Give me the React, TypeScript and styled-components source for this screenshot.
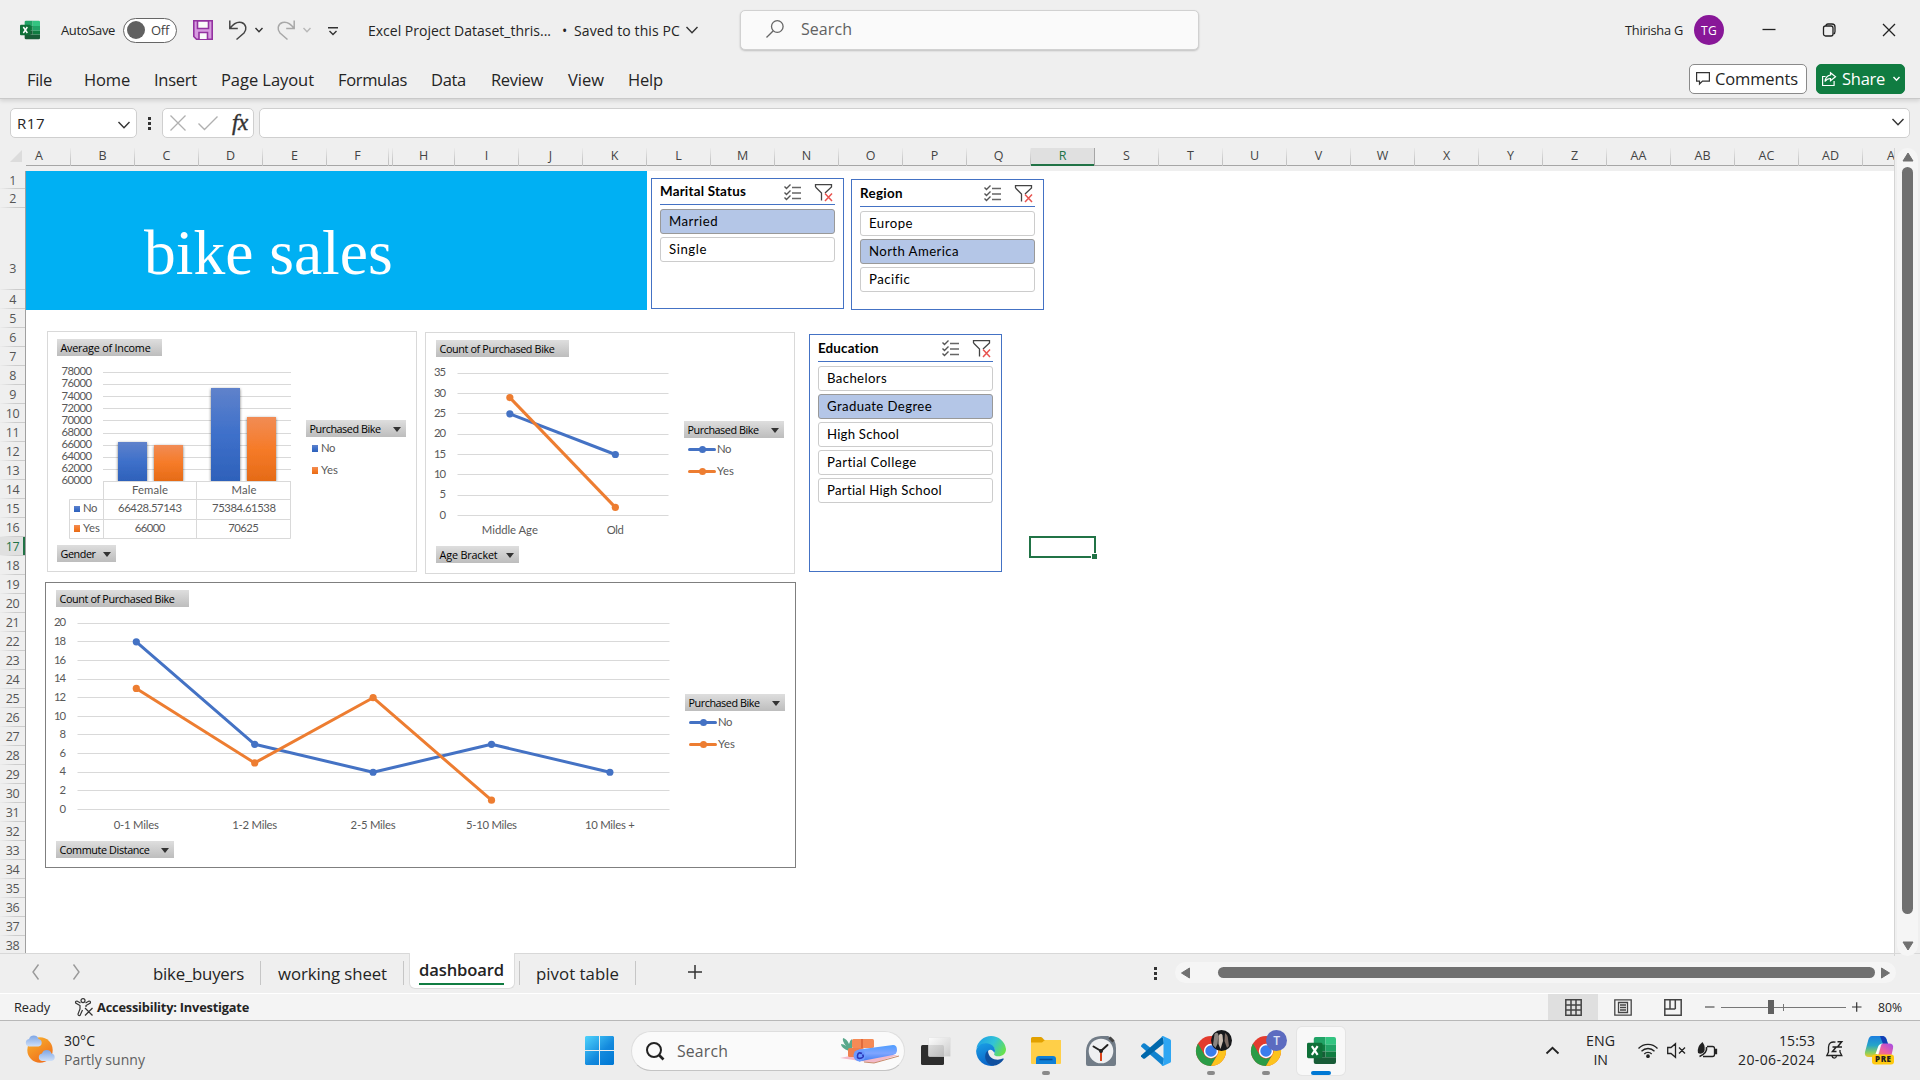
import React, { useLayoutEffect, useRef } from 'react';
import styled, { createGlobalStyle, css } from 'styled-components';

const UI = '"Open Sans", "Noto Sans", sans-serif';
const BODY = 'Lato, "Open Sans", sans-serif';
const BLUE = '#4472c4';
const ORANGE = '#ed7d31';
const GREEN = '#107c41';

const Global = createGlobalStyle`
  * { box-sizing: border-box; }
  body { margin: 0; background: #efefef; overflow: hidden; font-family: ${UI}; color: #242424; }
`;

/* ---------- text whose tracking adapts to the room it has ---------- */

const FitBox = styled.span<{ $w: number; $size: number; $ml?: number; $mt?: number; $bold?: number; $color?: string; $body?: boolean }>`
  display: block;
  flex: none;
  width: ${p => p.$w}px;
  margin: ${p => p.$mt ?? 0}px 0 0 ${p => p.$ml ?? 0}px;
  font: ${p => p.$bold ?? 400} ${p => p.$size}px/1.3 ${p => (p.$body ? BODY : UI)};
  color: ${p => p.$color ?? 'inherit'};
  white-space: pre;
`;

type FitProps = { w: number; size: number; ml?: number; mt?: number; bold?: number; color?: string; body?: boolean; children: string };

function Fit({ w, size, ml, mt, bold, color, body, children }: FitProps) {
  const ref = useRef<HTMLSpanElement>(null);
  useLayoutEffect(() => {
    const inner = ref.current;
    if (!inner) return;
    inner.style.letterSpacing = '0px';
    const natural = inner.getBoundingClientRect().width;
    inner.style.letterSpacing = `${(w - natural) / Math.max(1, children.length)}px`;
  }, [w, children]);
  return (
    <FitBox $w={w} $size={size} $ml={ml} $mt={mt} $bold={bold} $color={color} $body={body}>
      <span ref={ref}>{children}</span>
    </FitBox>
  );
}

const Icon = styled.svg<{ $ml?: number; $mt?: number }>`
  display: block;
  flex: none;
  overflow: visible;
  margin-left: ${p => p.$ml ?? 0}px;
  margin-top: ${p => p.$mt ?? 0}px;
`;

/* ---------- layout ---------- */

const Page = styled.div`
  width: 1920px;
  height: 1080px;
  display: grid;
  grid-template-rows: 99px 49px 805px 40px 28px 59px;
  background: #efefef;
`;

const Header = styled.header`
  position: relative;
  z-index: 1;
  border-bottom: 1px solid #c9c9c9;
  box-shadow: 0 2px 4px rgba(0, 0, 0, 0.12);
  background: #efefef;
`;

const TitleBar = styled.div`
  height: 60px;
  padding-left: 20px;
  display: flex;
  align-items: center;
`;

const Toggle = styled.div`
  width: 54px;
  height: 25px;
  margin-left: 8px;
  flex: none;
  border: 1px solid #666;
  border-radius: 13px;
  background: #fff;
  display: flex;
  align-items: center;
  padding-left: 3px;
  color: #444;
`;

const Knob = styled.i`
  width: 18px;
  height: 18px;
  border-radius: 50%;
  background: #616161;
`;

const SearchBox = styled.div`
  width: 459px;
  height: 40px;
  margin-left: 42px;
  flex: none;
  display: flex;
  align-items: center;
  padding: 0 0 2px 25px;
  border: 1px solid #d1d1d1;
  border-radius: 5px;
  background: #fafafa;
  box-shadow: 0 1px 2px rgba(0, 0, 0, 0.2);
`;

const Avatar = styled.div`
  width: 30px;
  height: 30px;
  margin-left: 11px;
  flex: none;
  border-radius: 50%;
  background: #881798;
  display: flex;
  align-items: center;
  justify-content: center;
`;

const Ribbon = styled.nav`
  height: 38px;
  padding: 0 15px 0 27px;
  display: flex;
  align-items: center;
`;

const RibbonButton = styled.button<{ $primary?: boolean }>`
  width: ${p => (p.$primary ? 89 : 118)}px;
  height: 30px;
  margin: 0 0 0 ${p => (p.$primary ? '9px' : 'auto')};
  padding: 0 0 0 6px;
  display: flex;
  align-items: center;
  border: 1px solid ${p => (p.$primary ? GREEN : '#8a8a8a')};
  border-radius: 5px;
  background: ${p => (p.$primary ? GREEN : '#fff')};
  color: ${p => (p.$primary ? '#fff' : '#242424')};
`;

const FormulaBar = styled.div`
  display: flex;
  align-items: flex-start;
  padding: 9px 0 0 10px;
`;

const Field = styled.div<{ $w: number; $ml?: number }>`
  width: ${p => p.$w}px;
  height: 30px;
  margin-left: ${p => p.$ml ?? 0}px;
  flex: none;
  border: 1px solid #cfcfcf;
  border-radius: 5px;
  background: #fff;
  display: flex;
  align-items: center;
`;

const FxLabel = styled.span`
  margin-left: 14px;
  font: italic 400 23px/26px "Liberation Serif", serif;
  letter-spacing: -0.5px;
  -webkit-text-stroke: 0.4px #333;
  color: #333;
`;

const Dots = styled.div<{ $ml: number; $mt?: number }>`
  width: 3px;
  height: 13px;
  margin: ${p => p.$mt ?? 0}px 0 0 ${p => p.$ml}px;
  flex: none;
  display: flex;
  flex-direction: column;
  justify-content: space-between;
  i { height: 3px; background: #333; }
`;

const SheetArea = styled.main`
  display: grid;
  grid-template-columns: 1895px 25px;
  min-height: 0;
`;

const SheetPane = styled.div`
  display: grid;
  grid-template-rows: 18px 5px 782px;
  overflow: hidden;
  border-right: 1px solid #d5d5d5;
`;

const ColumnHeader = styled.div`
  display: flex;
  overflow: hidden;
`;

const Corner = styled.div`
  width: 26px;
  height: 18px;
  flex: none;
  padding: 2px 0 0 10px;
`;

const ColumnCell = styled.div<{ $w: number; $shift?: number; $active?: boolean }>`
  width: ${p => p.$w}px;
  height: 18px;
  flex: none;
  display: flex;
  justify-content: center;
  padding-right: ${p => p.$shift ?? 0}px;
  font: 12.5px/15px ${UI};
  color: ${p => (p.$active ? '#217346' : '#444')};
  border-right: 1px solid;
  border-image: linear-gradient(#efefef, #c4c4c4 70%) 1;
  box-shadow: inset 0 -1px 0 #a6a6a6;
  ${p => p.$active && css`
    background: #e0e0e0;
    box-shadow: inset 0 -2px 0 #217346;
    border-image: none;
    border-color: #a6a6a6;
  `}
`;

const SheetBody = styled.div`
  display: flex;
  overflow: hidden;
`;

const RowHeader = styled.div`
  width: 26px;
  flex: none;
  border-right: 1px solid #a0a0a0;
`;

const RowCell = styled.div<{ $h: number; $pb?: number; $active?: boolean }>`
  height: ${p => p.$h}px;
  padding: 2px 0 ${p => p.$pb ?? 0}px;
  display: flex;
  align-items: ${p => (p.$pb ? 'flex-end' : 'center')};
  justify-content: center;
  font: 12.5px/16px ${UI};
  letter-spacing: -0.5px;
  color: ${p => (p.$active ? '#217346' : '#555')};
  border-bottom: 1px solid #d2d2d2;
  border-image: linear-gradient(90deg, #efefef, #cccccc 60%) 1;
  ${p => p.$active && css`
    background: #e0e0e0;
    box-shadow: inset -2px 0 0 #217346;
  `}
`;

const Canvas = styled.div`
  position: relative;
  flex: 1;
  background: #fff;
`;

const floating = css<{ $x: number; $y: number; $w: number; $h: number }>`
  position: absolute;
  left: ${p => p.$x - 26}px;
  top: ${p => p.$y - 171}px;
  width: ${p => p.$w}px;
  height: ${p => p.$h}px;
`;

const Banner = styled.h1`
  ${floating}
  margin: 0;
  padding: 45px 0 0 118px;
  background: #00b0f3;
  color: #fff;
  font: 400 63.5px/74px "Liberation Serif", serif;
`;

const SlicerBox = styled.section`
  ${floating}
  border: 1px solid ${BLUE};
  background: #fff;
  padding: 0 8px;
`;

const SlicerHead = styled.div<{ $h: number }>`
  height: ${p => p.$h}px;
  margin-bottom: 4px;
  padding: 1px 3px 0 0;
  display: flex;
  align-items: center;
  border-bottom: 1px solid ${BLUE};
  color: #000;
  & > svg:nth-of-type(1) { margin-left: auto; }
`;

const SlicerItem = styled.div<{ $on?: boolean }>`
  height: 25px;
  margin-bottom: 3px;
  padding-left: 8px;
  display: flex;
  align-items: center;
  border: 1px solid ${p => (p.$on ? '#999' : '#ccc')};
  border-radius: 3px;
  background: ${p => (p.$on ? '#b4c6e7' : '#fff')};
  color: #000;
`;

const Selection = styled.div`
  ${floating}
  border: 2px solid #217346;
`;

const Handle = styled.div`
  ${floating}
  border: solid #fff;
  border-width: 1px 0 0 1px;
  background: #217346;
`;

const ChartCard = styled.section<{ $dark?: boolean; $pl?: number }>`
  ${floating}
  border: 1px solid ${p => (p.$dark ? '#7f7f7f' : '#d9d9d9')};
  background: #fff;
  padding: 7px 0 0 ${p => p.$pl ?? 10}px;
`;

const ChartBody = styled.div`
  display: flex;
`;

const FieldButton = styled.div<{ $w: number }>`
  width: ${p => p.$w}px;
  height: 17px;
  padding: 1px 0 0 3.5px;
  display: flex;
  align-items: center;
  background: linear-gradient(#dedede, #bdbdbd);
  color: #000;
`;

const Arrow = styled.i`
  margin: 0 5px 0 auto;
  border: 4px solid transparent;
  border-top: 5px solid #333;
  border-bottom: 0;
`;

const Legend = styled.div<{ $mt: number }>`
  margin-top: ${p => p.$mt}px;
`;

const LegendItem = styled.div`
  height: 22px;
  padding: 1px 0 0 4px;
  display: flex;
  align-items: center;
  gap: 1px;
`;

const VScroll = styled.div`
  width: 21px;
  height: 808px;
  margin-left: 2px;
  border-radius: 11px;
  background: #f5f5f5;
  display: flex;
  flex-direction: column;
  align-items: center;
  z-index: 1;
`;

const Thumb = styled.i<{ $w: number; $h: number }>`
  width: ${p => p.$w}px;
  height: ${p => p.$h}px;
  flex: none;
  border-radius: 6px;
  background: #707070;
`;

const TabBar = styled.div`
  display: flex;
  border-top: 1px solid #d8d8d8;
`;

const Tab = styled.div<{ $w: number; $pl: number; $ml?: number }>`
  width: ${p => p.$w}px;
  height: 24px;
  margin: 7px 0 0 ${p => p.$ml ?? 0}px;
  padding: 2px 0 0 ${p => p.$pl}px;
  flex: none;
  display: flex;
  align-items: center;
  border-right: 1px solid #c6c6c6;
`;

const ActiveTab = styled.div`
  width: 106px;
  height: 36px;
  margin: -1px 0 0 5px;
  padding: 6px 0 0 9px;
  flex: none;
  background: #fff;
  border: 1px solid #dcdcdc;
  border-top: 0;
  border-radius: 0 0 6px 6px;
`;

const Underline = styled.i`
  display: block;
  width: 85px;
  height: 2px;
  margin-top: 2px;
  background: ${GREEN};
`;

const HScroll = styled.div`
  width: 721px;
  height: 21px;
  margin: 8px 0 0 18px;
  padding-left: 6px;
  display: flex;
  align-items: center;
  border-radius: 11px;
  background: #f5f5f5;
`;

const StatusBar = styled.div`
  display: flex;
  align-items: center;
  padding-left: 14px;
  border-top: 1px solid #fff;
  border-bottom: 1px solid #b8b8b8;
  background: #f4f4f4;
`;

const ViewButton = styled.div<{ $on?: boolean; $ml?: number }>`
  width: 50px;
  height: 26px;
  flex: none;
  margin-left: ${p => p.$ml ?? 0}px;
  display: flex;
  align-items: center;
  justify-content: center;
  background: ${p => (p.$on ? '#dfdfdf' : 'transparent')};
`;

const Taskbar = styled.footer`
  display: flex;
  align-items: center;
  padding: 0 0 0 25px;
  background: #ededed;
`;

const Stack = styled.div<{ $w: number; $ml: number; $align?: string }>`
  width: ${p => p.$w}px;
  margin-left: ${p => p.$ml}px;
  flex: none;
  display: flex;
  flex-direction: column;
  align-items: ${p => p.$align ?? 'flex-start'};
  gap: 1px;
`;

const TaskSearch = styled.div`
  width: 274px;
  height: 40px;
  margin-left: 17px;
  flex: none;
  padding-left: 14px;
  display: flex;
  align-items: center;
  border: 1px solid #dedede;
  border-bottom-color: #c4c4c4;
  border-radius: 20px;
  background: #fafafa;
`;

const TaskApp = styled.div<{ $ml: number; $tile?: boolean; $mark?: string }>`
  width: 48px;
  height: 48px;
  margin-left: ${p => p.$ml}px;
  flex: none;
  position: relative;
  display: flex;
  align-items: center;
  justify-content: center;
  border-radius: 5px;
  ${p => p.$tile && css`background: #f8f8f8; box-shadow: 0 0 0 1px #e4e4e4;`}
  ${p => p.$mark && css`
    &::after {
      content: '';
      position: absolute;
      bottom: 0;
      width: ${p.$tile ? 20 : 8}px;
      height: 4px;
      border-radius: 2px;
      background: ${p.$mark};
    }
  `}
`;

/* ---------- icons ---------- */

const Caret = ({ w = 8, ml = 0, mt = 0, color = '#333', sw = 1.4 }) => (
  <Icon $ml={ml} $mt={mt} width={w} height={w / 2} viewBox={`0 0 ${w} ${w / 2}`} fill="none" stroke={color} strokeWidth={sw}>
    <path d={`M.5 0 ${w / 2} ${w / 2 - 0.3} ${w - 0.5} 0`} />
  </Icon>
);

const ExcelIcon = ({ size }: { size: number }) => (
  <Icon width={size} height={size} viewBox="0 0 30 30">
    <path d="M9 1h10v9H7V3q0-2 2-2Z" fill="#21a366" />
    <path d="M19 1h9q2 0 2 2v6H19Z" fill="#33c481" />
    <path d="M7 9h12v7H7Z" fill="#107c41" />
    <path d="M19 9h11v7H19Z" fill="#21a366" />
    <path d="M7 16h12v6H7Z" fill="#185c37" />
    <path d="M19 16h11v6H19Z" fill="#107c41" />
    <path d="M7 22h23v5q0 2-2 2H9q-2 0-2-2Z" fill="#185c37" />
    <rect x="0" y="7" width="16" height="16" rx="1.500" fill="#0f7038" />
    <path d="m5 10.500 6 9M11 10.500l-6 9" stroke="#fff" strokeWidth="2.200" />
  </Icon>
);

const ChecklistIcon = () => (
  <Icon width="17" height="17" viewBox="0 0 17 17" fill="none" strokeWidth="1.400">
    <path d="M.5 2.500 2.500 4.500 6.500.5M.5 8.500l2 2 4-4M.5 13.500l2 2 4-4" stroke="#555" />
    <path d="M8 3.500h9M8 9h9M8 14.500h9" stroke="#666" />
  </Icon>
);

const ClearFilterIcon = () => (
  <Icon $ml={14} width="17" height="17" viewBox="0 0 17 17" fill="none" strokeWidth="1.300">
    <path d="M.5 3V.7h16V3L10 9M.5 3 6.500 9v7.500" stroke="#444" />
    <path d="M10 9.500 17 17M17 9.500 10 17" stroke="#e8534f" strokeWidth="1.500" />
  </Icon>
);

const ChromeIcon = ({ id }: { id: string }) => (
  <Icon width="30" height="30" viewBox="0 0 30 30">
    <circle cx="15" cy="15" r="15" fill="#e33b2e" />
    <path d="M2 7.500A15 15 0 0 0 15 30l6.500-11.250A7.500 7.500 0 0 1 8.500 18.750Z" fill="#2a9c46" />
    <path d="M15 30A15 15 0 0 0 28 7.500H15a7.500 7.500 0 0 1 6.500 11.250Z" fill="#fcc31e" />
    <circle cx="15" cy="15" r="7.200" fill="#fff" />
    <circle cx="15" cy="15" r="5.700" fill="#3b7ded" />
    {id === 'photo' ? (
      <g>
        <circle cx="25.500" cy="4.500" r="10.500" fill="#17181b" />
        <path d="M18.500-2q3-3 4 1l-1 9-2 4-2.500-3Z" fill="#8b8580" />
        <path d="M22.500 0q2-4 4-1l.5 6-2.500 8-2-5Z" fill="#cbbdb2" />
        <path d="M29-3q3 2 3 6l1 7-2 2-2.500-7Z" fill="#7d6c64" />
      </g>
    ) : (
      <g>
        <circle cx="25.500" cy="4.500" r="10.500" fill="#5c6bc0" />
        <text x="25.700" y="9" textAnchor="middle" fontFamily="Open Sans" fontWeight="600" fontSize="12" fill="#dfe2f5">T</text>
      </g>
    )}
  </Icon>
);

/* ---------- data ---------- */

const COLUMNS: [string, number, number?][] = [
  ['A', 45, 18], ['B', 64], ['C', 64], ['D', 64], ['E', 64], ['F', 62], ['', 4], ['H', 62],
  ...'I J K L M N O P Q R S T U V W X Y Z AA AB AC AD AE'.split(' ').map(c => [c, 64] as [string, number]),
];

const rowHeight = (n: number) => (n === 1 ? 18 : n === 3 ? 82 : 19);

const MENU: [string, number, number][] = [
  ['File', 25, 0], ['Home', 46, 32], ['Insert', 43, 24], ['Page Layout', 93, 24], ['Formulas', 69, 24],
  ['Data', 35, 24], ['Review', 52, 25], ['View', 36, 25], ['Help', 35, 24],
];

/* ---------- chart parts ---------- */

type Anchor = 'start' | 'middle' | 'end';
const ChartText = ({ x, y, w, anchor = 'middle', children }: { x: number; y: number; w: number; anchor?: Anchor; children: string }) => (
  <text x={x} y={y + 4} textAnchor={anchor} textLength={w} lengthAdjust="spacing" fontFamily={BODY} fontSize="11.300" fill="#595959">
    {children}
  </text>
);

const FieldLabel = ({ w, tw, arrow = true, children }: { w: number; tw: number; arrow?: boolean; children: string }) => (
  <FieldButton $w={w}>
    <Fit w={tw} size={10.8}>{children}</Fit>
    {arrow && <Arrow />}
  </FieldButton>
);

function ChartLegend({ mt, line }: { mt: number; line?: boolean }) {
  return (
    <Legend $mt={mt}>
      <FieldLabel w={100} tw={71}>Purchased Bike</FieldLabel>
      {[['No', BLUE, 14], ['Yes', ORANGE, 17]].map(([name, color, w]) => (
        <LegendItem key={name}>
          {line ? (
            <Icon width="28" height="7" viewBox="0 0 28 7">
              <path d="M1.500 3.500h25" stroke={color as string} strokeWidth="3" strokeLinecap="round" />
              <circle cx="14.500" cy="3.500" r="3.500" fill={color as string} />
            </Icon>
          ) : (
            <Icon width="10" height="7" viewBox="-2 0 10 7">
              <rect y="0" width="6" height="7" fill={`url(#${name === 'No' ? 'gBlue' : 'gOrange'})`} />
            </Icon>
          )}
          <Fit body w={w as number} size={11.3} color="#595959">{name as string}</Fit>
        </LegendItem>
      ))}
    </Legend>
  );
}

type LineProps = {
  box: [number, number, number, number];
  x0: number; x1: number; yTop: number; yBase: number; max: number; step: number; labelX: number; catY: number;
  cats: [string, number][];
  series: { color: string; values: number[] }[];
};

function LinePlot({ box, x0, x1, yTop, yBase, max, step, labelX, catY, cats, series }: LineProps) {
  const ticks = Array.from({ length: max / step + 1 }, (_, i) => i * step);
  const y = (v: number) => yBase - ((yBase - yTop) * v) / max;
  const cw = (x1 - x0) / cats.length;
  const x = (i: number) => x0 + cw * (i + 0.5);
  return (
    <Icon width={box[2]} height={box[3]} viewBox={box.join(' ')}>
      {ticks.map(t => (
        <g key={t}>
          <path d={`M${x0} ${Math.round(y(t)) + 0.5}H${x1}`} stroke="#d9d9d9" />
          <ChartText x={labelX} y={y(t) - 0.3} w={t > 9 ? 12 : 6} anchor="end">{String(t)}</ChartText>
        </g>
      ))}
      {cats.map(([c, w], i) => <ChartText key={c} x={x(i) - 0.4} y={catY} w={w}>{c}</ChartText>)}
      {series.map(s => (
        <g key={s.color}>
          <polyline points={s.values.map((v, i) => `${x(i) - 0.4},${y(v) + 0.5}`).join(' ')} fill="none" stroke={s.color} strokeWidth="3" strokeLinejoin="round" />
          {s.values.map((v, i) => <circle key={i} cx={x(i) - 0.4} cy={y(v) + 0.5} r="3.600" fill={s.color} />)}
        </g>
      ))}
    </Icon>
  );
}

function IncomePlot() {
  const bars: [number, number, string][] = [[118, 442, 'gBlue'], [154, 445, 'gOrange'], [211, 388, 'gBlue'], [247, 417, 'gOrange']];
  return (
    <Icon width="249" height="189" viewBox="57 356 249 189">
      <defs>
        <linearGradient id="gBlue" x1="0" y1="0" x2="0" y2="1">
          <stop offset="0" stopColor="#5f82cb" /><stop offset=".5" stopColor="#3e70ca" /><stop offset="1" stopColor="#2e61ba" />
        </linearGradient>
        <linearGradient id="gOrange" x1="0" y1="0" x2="0" y2="1">
          <stop offset="0" stopColor="#f18c55" /><stop offset=".5" stopColor="#f67b28" /><stop offset="1" stopColor="#e56b17" />
        </linearGradient>
        <filter id="barShadow" x="-30%" y="-10%" width="160%" height="120%">
          <feDropShadow dx="0" dy="1" stdDeviation="1.800" floodColor="#000" floodOpacity=".55" />
        </filter>
        <clipPath id="aboveAxis"><rect x="95" y="360" width="200" height="121" /></clipPath>
      </defs>
      {Array.from({ length: 10 }, (_, i) => (
        <g key={i}>
          <path d={`M103 ${Math.round(372 + i * 12.1) + 0.5}H291`} stroke="#d9d9d9" />
          <ChartText x={92} y={371.3 + i * 12.1} w={30.5} anchor="end">{String(78000 - i * 2000)}</ChartText>
        </g>
      ))}
      <g clipPath="url(#aboveAxis)">
        {bars.map(([x, top, fill]) => (
          <rect key={x} x={x} y={top} width="29" height={481 - top} fill={`url(#${fill})`} filter="url(#barShadow)" />
        ))}
      </g>
      <path d="M103.500 481.500H290.500V538.500H69.500V499.500H290.500M69.500 519.500H290.500M103.500 481.500V538.500M196.500 481.500V538.500" fill="none" stroke="#d9d9d9" />
      <ChartText x={150} y={490} w={36}>Female</ChartText>
      <ChartText x={244} y={490} w={25}>Male</ChartText>
      <ChartText x={150} y={508} w={64}>66428.57143</ChartText>
      <ChartText x={244} y={508} w={64}>75384.61538</ChartText>
      <ChartText x={150} y={528} w={30.5}>66000</ChartText>
      <ChartText x={243.5} y={528} w={30.5}>70625</ChartText>
      <rect x="74" y="506" width="6" height="6" fill="url(#gBlue)" />
      <rect x="74" y="525" width="6" height="7" fill="url(#gOrange)" />
      <ChartText x={83} y={508} w={14.5} anchor="start">No</ChartText>
      <ChartText x={83} y={527.5} w={17} anchor="start">Yes</ChartText>
    </Icon>
  );
}

type SlicerProps = { x: number; y: number; h: number; head: number; title: string; tw: number; items: [string, number, boolean?][] };

const Slicer = ({ x, y, h, head, title, tw, items }: SlicerProps) => (
  <SlicerBox $x={x} $y={y} $w={193} $h={h}>
    <SlicerHead $h={head}>
      <Fit body w={tw} size={13.4} bold={700}>{title}</Fit>
      <ChecklistIcon />
      <ClearFilterIcon />
    </SlicerHead>
    {items.map(([name, w, on]) => (
      <SlicerItem key={name} $on={on}><Fit body w={w} size={13.2}>{name}</Fit></SlicerItem>
    ))}
  </SlicerBox>
);

/* ---------- page ---------- */

export default function App() {
  return (
    <Page>
      <Global />
      <Header>
        <TitleBar>
          <ExcelIcon size={20} />
          <Fit w={54} size={13} ml={21}>AutoSave</Fit>
          <Toggle><Knob /><Fit w={18} size={13} ml={6}>Off</Fit></Toggle>
          <Icon $ml={16} width="20" height="20" viewBox="0 0 20 20" stroke="#9332a0" strokeWidth="1.600">
            <path d="M.8.8h18.400v18.400H3.500L.8 16.500Z" fill="#d79be0" />
            <path d="M4.500 1h11v7.500h-11Z" fill="#fafafa" />
            <path d="M6 19v-6.500h8.500V19" fill="#fafafa" />
          </Icon>
          <Icon $ml={16} width="18" height="20" viewBox="0 0 18 20" fill="none" stroke="#444" strokeWidth="1.500">
            <path d="M.8.5v8h8M1 8.300C5 3 9 1.500 12.500 2.500c5 1.800 5.500 7 2.500 10.500l-7.500 6.500" />
          </Icon>
          <Caret ml={8} w={8} />
          <Icon $ml={14} width="18" height="20" viewBox="0 0 18 20" fill="none" stroke="#a8a8a8" strokeWidth="1.500">
            <path d="M17.200.5v8h-8M17 8.300C13 3 9 1.500 5.500 2.500c-5 1.800-5.500 7-2.500 10.500l7.500 6.500" />
          </Icon>
          <Caret ml={8} w={8} color="#b8b8b8" />
          <Icon $ml={17} $mt={2} width="10" height="9" viewBox="0 0 10 9" fill="none" stroke="#333" strokeWidth="1.400">
            <path d="M0 .7h10M1.500 4 5 7.500 8.500 4" />
          </Icon>
          <Fit w={183} size={14} ml={30} mt={2}>Excel Project Dataset_thris...</Fit>
          <Fit w={7} size={14} ml={11} mt={2}>•</Fit>
          <Fit w={106} size={14} ml={5} mt={2}>Saved to this PC</Fit>
          <Caret ml={6} w={12} mt={-1} />
          <SearchBox>
            <Icon width="18" height="18" viewBox="0 0 18 18" fill="none" stroke="#666" strokeWidth="1.300">
              <circle cx="11.300" cy="6.500" r="5.800" /><path d="M7.300 10.700.5 17.500" />
            </Icon>
            <Fit w={51} size={16} ml={17} color="#616161">Search</Fit>
          </SearchBox>
          <Fit w={58} size={12.8} ml={426}>Thirisha G</Fit>
          <Avatar><Fit w={16} size={12} color="#fff" mt={1}>TG</Fit></Avatar>
          <Icon $ml={38} width="14" height="14" viewBox="0 0 14 14" stroke="#222" strokeWidth="1.300"><path d="M.5 6.500h13" /></Icon>
          <Icon $ml={46} width="14" height="14" viewBox="0 0 14 14" fill="none" stroke="#222" strokeWidth="1.300">
            <rect x="1.500" y="3" width="9.500" height="10" rx="2" /><path d="M4 3Q4 1 6 1h4q3 0 3 3v4.500q0 2-1.500 2.500" />
          </Icon>
          <Icon $ml={46} width="14" height="14" viewBox="0 0 14 14" stroke="#222" strokeWidth="1.300"><path d="m1 1 12 12M13 1 1 13" /></Icon>
        </TitleBar>
        <Ribbon>
          {MENU.map(([name, w, ml]) => <Fit key={name} w={w} ml={ml} mt={2} size={16.5}>{name}</Fit>)}
          <RibbonButton>
            <Icon $mt={-1} width="14" height="13" viewBox="0 0 14 13" fill="none" stroke="#333" strokeWidth="1.200">
              <path d="M.6.6h12.800v8.500H6.500L3.500 12V9.100H.6Z" />
            </Icon>
            <Fit w={83} size={16.5} ml={5}>Comments</Fit>
          </RibbonButton>
          <RibbonButton $primary>
            <Icon $ml={-1} width="14" height="14" viewBox="0 0 14 14" fill="none" stroke="#fff" strokeWidth="1.200">
              <path d="M3.500 4.500H.6v9h11.500V9M8.500.8l5 4-5 4V6.500Q5 6.500 3 9.500 3.500 4 8.500 3Z" />
            </Icon>
            <Fit w={43} size={16.5} ml={6}>Share</Fit>
            <Caret ml={8} w={7} color="#fff" />
          </RibbonButton>
        </Ribbon>
      </Header>

      <FormulaBar>
        <Field $w={127}>
          <Fit w={28} size={15} ml={6} mt={1}>R17</Fit>
          <Caret ml={73} w={12} mt={3} />
        </Field>
        <Dots $ml={11} $mt={9}><i /><i /><i /></Dots>
        <Field $w={92} $ml={11}>
          <Icon $ml={7} width="16" height="16" viewBox="0 0 16 16" stroke="#b0b0b0" strokeWidth="1.300"><path d="m.5.5 15 15M15.500.5l-15 15" /></Icon>
          <Icon $ml={12} width="20" height="14" viewBox="0 0 20 14" fill="none" stroke="#b0b0b0" strokeWidth="1.400"><path d="m.5 7.500 6 6L19.500.5" /></Icon>
          <FxLabel>fx</FxLabel>
        </Field>
        <Field $w={1651} $ml={5}><Caret ml={1632} w={12} mt={-2} /></Field>
      </FormulaBar>

      <SheetArea>
        <SheetPane>
          <ColumnHeader>
            <Corner>
              <Icon width="12" height="12" viewBox="0 0 12 12"><path d="M12 0v12H0Z" fill="#dcdcdc" /></Icon>
            </Corner>
            {COLUMNS.map(([name, w, shift], i) => (
              <ColumnCell key={i} $w={w} $shift={shift} $active={name === 'R'}>{name}</ColumnCell>
            ))}
          </ColumnHeader>
          <div />
          <SheetBody>
            <RowHeader>
              {Array.from({ length: 38 }, (_, i) => i + 1).map(n => (
                <RowCell key={n} $h={rowHeight(n)} $pb={n === 3 ? 12 : 0} $active={n === 17}>{n}</RowCell>
              ))}
            </RowHeader>
            <Canvas>
              <Banner $x={26} $y={171} $w={621} $h={139}>bike sales</Banner>

              <Slicer x={651} y={178} h={131} head={26} title="Marital Status" tw={86} items={[['Married', 49, true], ['Single', 38]]} />
              <Slicer x={851} y={179} h={131} head={27} title="Region" tw={43} items={[['Europe', 44], ['North America', 90, true], ['Pacific', 41]]} />
              <Slicer
                x={809} y={334} h={238} head={27} title="Education" tw={61}
                items={[['Bachelors', 60], ['Graduate Degree', 105, true], ['High School', 72], ['Partial College', 90], ['Partial High School', 115]]}
              />

              <ChartCard $x={47} $y={331} $w={370} $h={241} $pl={9}>
                <FieldLabel w={105} tw={90} arrow={false}>Average of Income</FieldLabel>
                <ChartBody><IncomePlot /><ChartLegend mt={64} /></ChartBody>
                <FieldLabel w={59} tw={35}>Gender</FieldLabel>
              </ChartCard>

              <ChartCard $x={425} $y={332} $w={370} $h={242}>
                <FieldLabel w={133} tw={115} arrow={false}>Count of Purchased Bike</FieldLabel>
                <ChartBody>
                  <LinePlot
                    box={[436, 357, 248, 189]} x0={457.5} x1={668.5} yTop={372.7} yBase={515} max={35} step={5} labelX={446} catY={530.3}
                    cats={[['Middle Age', 56], ['Old', 17]]}
                    series={[{ color: BLUE, values: [25, 15] }, { color: ORANGE, values: [29, 2] }]}
                  />
                  <ChartLegend mt={64} line />
                </ChartBody>
                <FieldLabel w={83} tw={58}>Age Bracket</FieldLabel>
              </ChartCard>

              <ChartCard $dark $x={45} $y={582} $w={751} $h={286}>
                <FieldLabel w={133} tw={115} arrow={false}>Count of Purchased Bike</FieldLabel>
                <ChartBody>
                  <LinePlot
                    box={[56, 607, 629, 234]} x0={77.5} x1={669.5} yTop={622.7} yBase={809} max={20} step={2} labelX={66} catY={825.3}
                    cats={[['0-1 Miles', 45], ['1-2 Miles', 45], ['2-5 Miles', 45], ['5-10 Miles', 51], ['10 Miles +', 50]]}
                    series={[{ color: BLUE, values: [18, 7, 4, 7, 4] }, { color: ORANGE, values: [13, 5, 12, 1] }]}
                  />
                  <ChartLegend mt={87} line />
                </ChartBody>
                <FieldLabel w={118} tw={90}>Commute Distance</FieldLabel>
              </ChartCard>

              <Selection $x={1029} $y={536} $w={67} $h={22} />
              <Handle $x={1091} $y={553} $w={6} $h={6} />
            </Canvas>
          </SheetBody>
        </SheetPane>
        <VScroll>
          <Icon $mt={5} width="12" height="8" viewBox="0 0 12 8"><path d="M6 0 11 8H1Z" fill="#707070" stroke="#707070" strokeLinejoin="round" /></Icon>
          <Icon width="1" height="6" />
          <Thumb $w={11} $h={747} />
          <Icon $mt={28} width="12" height="8" viewBox="0 0 12 8"><path d="M6 8 11 0H1Z" fill="#707070" stroke="#707070" strokeLinejoin="round" /></Icon>
        </VScroll>
      </SheetArea>

      <TabBar>
        <Icon $ml={32} $mt={10} width="7" height="16" viewBox="0 0 7 16" fill="none" stroke="#999" strokeWidth="1.400"><path d="M6.500.5 1 8l5.500 7.500" /></Icon>
        <Icon $ml={34} $mt={10} width="7" height="16" viewBox="0 0 7 16" fill="none" stroke="#999" strokeWidth="1.400"><path d="M.5.5 6 8 .5 15.500" /></Icon>
        <Tab $w={120} $ml={61} $pl={12}><Fit w={91} size={16.8}>bike_buyers</Fit></Tab>
        <Tab $w={143} $pl={17}><Fit w={109} size={16.8}>working sheet</Fit></Tab>
        <ActiveTab>
          <Fit w={85} size={16.6} bold={600}>dashboard</Fit>
          <Underline />
        </ActiveTab>
        <Tab $w={5} $pl={0} />
        <Tab $w={116} $pl={16}><Fit w={83} size={16.8}>pivot table</Fit></Tab>
        <Icon $ml={52} $mt={11} width="14" height="14" viewBox="0 0 14 14" stroke="#333" strokeWidth="1.500"><path d="M0 7h14M7 0v14" /></Icon>
        <Dots $ml={452} $mt={13}><i /><i /><i /></Dots>
        <HScroll>
          <Icon width="9" height="12" viewBox="0 0 9 12"><path d="M.5 6 8.500 1v10Z" fill="#707070" stroke="#707070" strokeLinejoin="round" /></Icon>
          <Icon width="28" height="1" />
          <Thumb $w={657} $h={11} />
          <Icon $ml={6} width="9" height="12" viewBox="0 0 9 12"><path d="M8.500 6 .5 1v10Z" fill="#707070" stroke="#707070" strokeLinejoin="round" /></Icon>
        </HScroll>
      </TabBar>

      <StatusBar>
        <Fit w={36} size={12.8}>Ready</Fit>
        <Icon $ml={25} width="18" height="18" viewBox="0 0 18 18" fill="none" stroke="#333" strokeWidth="1.200">
          <circle cx="8" cy="2.600" r="2" />
          <path d="M5.500 5 2 3Q0 3 .7 5L5 7.500V11l-2 5q0 2 2 1.500L7.500 12M10.500 5 14 3q2 0 1.300 2L11 7.500V9M10 10l7.500 7.500M17.500 10 10 17.500" />
        </Icon>
        <Fit w={152} size={12.8} ml={4} bold={700}>Accessibility: Investigate</Fit>
        <ViewButton $on $ml={1299}>
          <Icon width="17" height="17" viewBox="0 0 17 17" fill="none" stroke="#444" strokeWidth="1.500"><path d="M.8.8h15.400v15.400H.8ZM.8 6h15.400M.8 11h15.400M6 .8v15.400M11 .8v15.400" /></Icon>
        </ViewButton>
        <ViewButton>
          <Icon width="18" height="17" viewBox="0 0 18 17" fill="none" stroke="#444" strokeWidth="1.300"><path d="M.8.8h16.400v15.400H.8ZM4.500 3.500h9v10h-9ZM6 6h6M6 8.500h6M6 11h6" /></Icon>
        </ViewButton>
        <ViewButton>
          <Icon width="18" height="17" viewBox="0 0 18 17" fill="none" stroke="#444" strokeWidth="1.500"><path d="M.8.8h16.400v15.400H.8ZM.8 10h10.500M6 .8V10M11.300.8V10" /></Icon>
        </ViewButton>
        <Icon $ml={7} width="156" height="14" viewBox="0 0 156 14">
          <path d="M0 7h9.500M147 7h9.500M151.700 2.300v9.500" stroke="#333" strokeWidth="1.200" />
          <path d="M16 7.500h125M78.500 4v7" stroke="#777" />
          <rect x="63" y="0" width="6" height="14" fill="#616161" />
        </Icon>
        <Fit w={24} size={12.2} ml={17} mt={1}>80%</Fit>
      </StatusBar>

      <Taskbar>
        <Icon $mt={-3} width="31" height="28" viewBox="0 0 31 28">
          <defs>
            <linearGradient id="sun" x1="0" y1="0" x2=".6" y2="1"><stop offset="0" stopColor="#f9b52f" /><stop offset="1" stopColor="#f0711c" /></linearGradient>
            <linearGradient id="cloud" x1="0" y1="0" x2="0" y2="1"><stop offset="0" stopColor="#7ea6e6" /><stop offset="1" stopColor="#cfe0f8" /></linearGradient>
          </defs>
          <circle cx="15" cy="15" r="12.700" fill="url(#sun)" />
          <path d="M4 11.500a3.800 3.800 0 0 1 0-7.500 5 5 0 0 1 9.500 0 3.800 3.800 0 0 1 0 7.500Z" fill="url(#cloud)" />
          <path d="M17 26a3.800 3.800 0 0 1 0-7.500 5 5 0 0 1 9.500 0 3.800 3.800 0 0 1 0 7.500Z" fill="url(#cloud)" />
        </Icon>
        <Stack $w={82} $ml={8}>
          <Fit w={31} size={14}>30°C</Fit>
          <Fit w={81} size={14} color="#5f5f5f">Partly sunny</Fit>
        </Stack>
        <Icon $ml={439} width="29" height="29" viewBox="0 0 29 29">
          <defs><linearGradient id="win" gradientUnits="userSpaceOnUse" x1="0" y1="0" x2="26" y2="29"><stop offset="0" stopColor="#4fd3fc" /><stop offset=".6" stopColor="#1389dd" /><stop offset="1" stopColor="#0078d4" /></linearGradient></defs>
          <path d="M1 0h13v14H0V1ZM15 0h13l1 1v13H15ZM0 15h14v14H1l-1-1ZM15 15h14v13l-1 1H15Z" fill="url(#win)" />
        </Icon>
        <TaskSearch>
          <Icon width="18" height="18" viewBox="0 0 18 18" fill="none" stroke="#222" strokeWidth="2"><circle cx="8" cy="8" r="7" /><path d="m13 13 4.500 4.500" strokeWidth="2.600" /></Icon>
          <Fit w={51} size={15.8} ml={13} mt={1} color="#5c5c5c">Search</Fit>
          <Icon $ml={112} width="59" height="27" viewBox="0 0 59 27">
            <defs><linearGradient id="mat" x1="0" y1="0" x2="0" y2="1"><stop offset="0" stopColor="#4f9dff" /><stop offset=".5" stopColor="#7fa5ff" /><stop offset="1" stopColor="#3f7df2" /></linearGradient></defs>
            <path d="M0 21 10 19 58 18 34 26Z" fill="#f3b9c9" />
            <path d="m24 25 10 1 25-7" stroke="#c88a6a" fill="none" />
            <path d="M9 14Q1 11 1 7q3 0 5 2Q2 4 3 1q4 1 6 6Q10 3 12 2q2 6-1 12Z" fill="#5aa88c" />
            <rect x="8" y="11" width="16" height="9" rx="1.500" fill="#ef7f4d" />
            <rect x="12" y="2" width="22" height="9" rx="1.500" fill="#f58a55" />
            <path d="M21 2h2v9h-2Z" fill="#e06a3c" />
            <path d="M19 12.500 53 8q4 0 4 5 0 4-4 5l-34 6.500Z" fill="url(#mat)" />
            <circle cx="19.500" cy="18.500" r="6" fill="#6c9bff" />
            <path d="M22 16.500q-4-2-4.500 2t4 2.500q3-1 1-3.500" fill="none" stroke="#2b35b8" strokeWidth="1.600" />
          </Icon>
        </TaskSearch>
        <TaskApp $ml={7}>
          <Icon width="30" height="28" viewBox="0 0 30 28">
            <defs><linearGradient id="tv" x1="0" y1="0" x2="1" y2="1"><stop offset="0" stopColor="#fff" /><stop offset="1" stopColor="#c6c6c6" /></linearGradient></defs>
            <rect x="0" y="8" width="23" height="20" rx="1.500" fill="#2d2d2d" />
            <rect x="7.500" y=".5" width="22" height="19" rx="1" fill="url(#tv)" fillOpacity=".88" stroke="#e3e3e3" strokeWidth=".6" />
          </Icon>
        </TaskApp>
        <TaskApp $ml={7}>
          <Icon width="30" height="30" viewBox="0 0 30 30">
            <defs>
              <linearGradient id="edgeA" x1="0" y1=".2" x2="1" y2=".6"><stop offset="0" stopColor="#1e9fe8" /><stop offset=".55" stopColor="#32c3d6" /><stop offset="1" stopColor="#67e14e" /></linearGradient>
              <linearGradient id="edgeB" x1="0" y1="0" x2=".3" y2="1"><stop offset="0" stopColor="#1aa0e6" /><stop offset="1" stopColor="#0b67c9" /></linearGradient>
            </defs>
            <path d="M.3 13A15 15 0 0 1 30 13c0 5-4 7.500-8 7.300-3.500-.2-4.500-1.500-3.500-3 1.500-3 0-6-3.500-7.300C9 7.500 2.500 9 .3 13Z" fill="url(#edgeA)" />
            <path d="M.1 15C1 9.500 6 6.800 10.500 7.200c4.500.3 8.500 3.500 8.500 7.300 0 1-.2 1.700-.7 2.600-1-3-4.300-4.600-6.300-2.100C8.500 20 13 28 18.500 29.500A15 15 0 0 1 .1 15Z" fill="url(#edgeB)" />
            <path d="M12 14.500C7 18 8.500 28 17 29.800c4.500-.3 8.500-2.800 10.700-6.500.3-.7-.3-1-.9-.7-5.800 2.800-14.800.4-14.800-8.100Z" fill="#10509f" />
          </Icon>
        </TaskApp>
        <TaskApp $ml={7} $mark="#8a8a8a">
          <Icon width="30" height="27" viewBox="0 0 30 27">
            <path d="M1.500 0H10q1 0 2 1.500T14 3h14.500Q30 3 30 4.500V8H0V1.500Q0 0 1.500 0Z" fill="#e2a100" />
            <path d="M0 5.500h11l3-2.500h15q1 0 1 1v22q0 1-1 1H1q-1 0-1-1Z" fill="#ffcf48" />
            <path d="M5 27v-5q0-3 3-3h14q3 0 3 3v5Z" fill="#0f7fd6" />
            <path d="M8.500 22.500h13" stroke="#074f96" strokeWidth="1.500" />
          </Icon>
        </TaskApp>
        <TaskApp $ml={7}>
          <Icon width="30" height="30" viewBox="0 0 30 30">
            <path d="M0 15Q1 1 15 0h7q8 3 8 12v16q0 2-2 2H2q-2 0-2-2Z" fill="#717c87" />
            <path d="m23.500 1.500 4 4" stroke="#444" strokeWidth="3" />
            <circle cx="15" cy="15" r="12.300" fill="#eef0f2" />
            <path d="M15 15 7.500 10.500M15 15l6.500-6" stroke="#222" strokeWidth="2" strokeLinecap="round" />
            <path d="M15 16v9" stroke="#d9431a" strokeWidth="2" />
            <circle cx="15" cy="15" r="2" fill="#222" />
          </Icon>
        </TaskApp>
        <TaskApp $ml={7}>
          <Icon width="30" height="30" viewBox="0 0 30 30">
            <path d="M22 30 0 10.500v-1l2-2q1-.6 2 0L23 22.500Z" fill="#1183cf" />
            <path d="M22 0 0 19.500v1l2 2q1 .6 2 0L23 7.500Z" fill="#0068ac" />
            <path d="m22 0 7 3.300q1 .5 1 1.500v20.400q0 1-1 1.500L22 30q-1 0-1.500-1l2-1.500v-25L20.500 1q.5-1 1.500-1Z" fill="#2ea6f3" />
          </Icon>
        </TaskApp>
        <TaskApp $ml={7} $mark="#8a8a8a"><ChromeIcon id="photo" /></TaskApp>
        <TaskApp $ml={7} $mark="#8a8a8a"><ChromeIcon id="letter" /></TaskApp>
        <TaskApp $ml={7} $tile $mark="#0078d4"><ExcelIcon size={29} /></TaskApp>

        <Icon $ml={201} width="13" height="7" viewBox="0 0 13 7" fill="none" stroke="#222" strokeWidth="1.800"><path d="M.5 6.500 6.500.8l6 5.700" /></Icon>
        <Stack $w={29} $ml={27} $align="center">
          <Fit w={29} size={14.2}>ENG</Fit>
          <Fit w={14} size={14.2}>IN</Fit>
        </Stack>
        <Icon $ml={23} width="20" height="15" viewBox="0 0 20 15" fill="none" stroke="#222" strokeWidth="1.300">
          <path d="M.5 5.500a13 13 0 0 1 19 0M3.500 8.300a9 9 0 0 1 13 0M6.300 11a5.200 5.200 0 0 1 7.400 0" /><circle cx="10" cy="13.200" r="1.200" fill="#222" />
        </Icon>
        <Icon $ml={9} width="19" height="15" viewBox="0 0 19 15" fill="none" stroke="#222" strokeWidth="1.300">
          <path d="M.7 4.500H4L8.500.7v13.600L4 10.500H.7ZM12 4.500l6 6M18 4.500l-6 6" />
        </Icon>
        <Icon $ml={11} $mt={-2} width="20" height="16" viewBox="0 0 20 16" fill="none" stroke="#222" strokeWidth="1.300">
          <path d="M10 4.500h5.500q2 0 2 2v6q0 2-2 2H6" /><path d="M18 7.500h1.500v4H18Z" fill="#222" />
          <path d="M1 11Q-.5 5 5.500 0q3.500 5 1.500 10Q4 13 1 11Z" fill="#222" stroke="none" /><path d="M9.500 5q1 6-7 9.500" strokeWidth="1.600" />
        </Icon>
        <Stack $w={77} $ml={21} $align="flex-end">
          <Fit w={36} size={14}>15:53</Fit>
          <Fit w={77} size={14}>20-06-2024</Fit>
        </Stack>
        <Icon $ml={11} $mt={-1} width="17" height="18" viewBox="0 0 17 18" fill="none" stroke="#222" strokeWidth="1.300">
          <path d="M9.500 1.200Q3 0 2.500 6v5L.8 14.500h15L14 11V9M6 15q.5 2.200 2.300 2.200T10.500 15" />
          <path d="M11.500.8h4.200L11.500 6h4.500M6.500 6h3.700l-3.700 4.500h4" strokeWidth="1.500" />
        </Icon>
        <Icon $ml={22} width="29" height="29" viewBox="0 0 29 29">
          <defs>
            <linearGradient id="cpA" x1="0" y1="0" x2="0" y2="1"><stop offset="0" stopColor="#1b7ee0" /><stop offset=".45" stopColor="#26a5c8" /><stop offset=".8" stopColor="#8ccf5d" /><stop offset="1" stopColor="#efc52b" /></linearGradient>
            <linearGradient id="cpB" x1="1" y1="0" x2="0" y2="1"><stop offset="0" stopColor="#a04be8" /><stop offset=".5" stopColor="#ec5fa5" /><stop offset="1" stopColor="#fb8b4f" /></linearGradient>
          </defs>
          <path d="M7 0h10q4 0 5 5l1 3h-5q-3 0-4 4l-1.500 6q-1 3-4 3H4q-5 0-4-5L3 5Q4 0 7 0Z" fill="url(#cpA)" />
          <path d="M17 0q4 0 5 5l1 3h-5l-3-8Z" fill="#123fb5" />
          <path d="M18 7.500h6q5 0 4 5l-2 8.500H9q4 0 5-4l2-7.500q.5-2 2-2Z" fill="url(#cpB)" />
          <path d="M18 7.500q-2 0-2.700 2.500L13 18h-2.500l2.500-7q1-3.500 5-3.500Z" fill="#fff" />
          <rect x="7" y="18.500" width="22" height="10" rx="3" fill="#ffc90e" />
          <text x="18" y="26.300" textAnchor="middle" textLength="16" fontFamily="Open Sans" fontWeight="800" fontSize="8" fill="#222">PRE</text>
        </Icon>
      </Taskbar>
    </Page>
  );
}
